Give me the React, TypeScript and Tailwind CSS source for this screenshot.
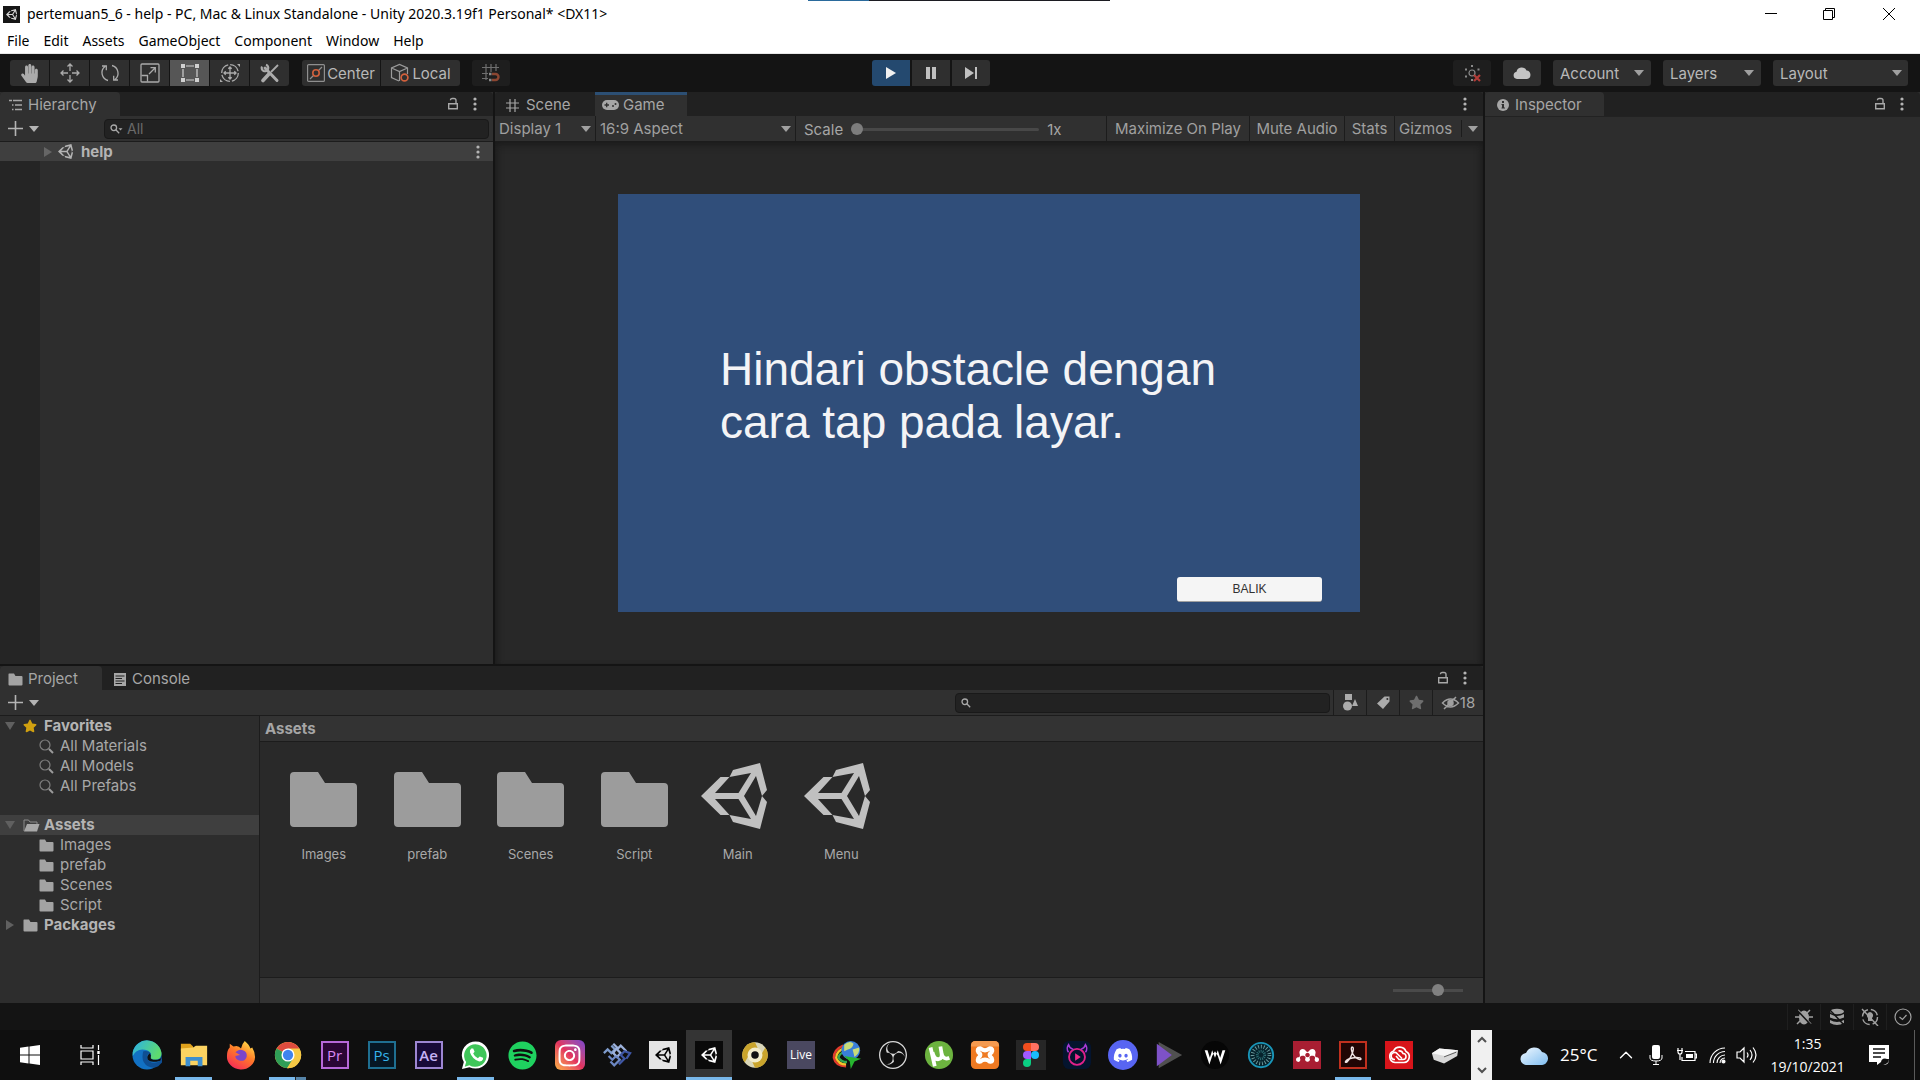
import React from "react";
import {
  FaDiscord,
  FaHandPaper,
  FaInstagram,
  FaMendeley,
  FaSpotify,
  FaStar,
} from "react-icons/fa";
import { LuChevronUp } from "react-icons/lu";
import { SiObsstudio } from "react-icons/si";

type Kids = { children?: React.ReactNode };
type Cls = { className?: string };

/* ---------- shared glyphs ---------- */

function UnityMark({ className }: Cls) {
  return (
    <svg viewBox="0 0 66 66" className={className} fill="currentColor" fillRule="evenodd" aria-hidden="true">
      <path d="M0 33 19.5 14H28.5L32 7 59 0 66 27 61 33 66 39 59 66 32 59 28.5 52H19.5ZM14 30H37.5L50 10 28.5 14ZM14 36 28.5 52 50 56 37.5 36ZM55 13 43 33 55 53 61 33Z" />
    </svg>
  );
}

function Arrow({ className = "text-[#a0a0a0]" }: Cls) {
  return (
    <svg width="10" height="6" viewBox="0 0 10 6" className={className} fill="currentColor" aria-hidden="true">
      <path d="M0 0H10L5 6Z" />
    </svg>
  );
}

function Dots() {
  return (
    <svg width="4" height="14" viewBox="0 0 4 14" fill="#b4b4b4" aria-hidden="true">
      <circle cx="2" cy="2" r="1.6" />
      <circle cx="2" cy="7" r="1.6" />
      <circle cx="2" cy="12" r="1.6" />
    </svg>
  );
}

function Lock() {
  return (
    <svg width="12" height="14" viewBox="0 0 12 14" fill="none" stroke="#a8a8a8" strokeWidth="1.4" aria-hidden="true">
      <path d="M1.7 6.7H10.3V11.7H1.700Z M9 6.500V3.500Q9 1.500 7 1.500H5Q3.400 1.500 3.400 3.300" />
    </svg>
  );
}

function Folder({ className }: Cls) {
  return (
    <svg width="15" height="13" viewBox="0 0 15 13" className={className} fill="#a3a3a3" aria-hidden="true">
      <path d="M1 .5H6L7.5 3H13.5Q14.5 3 14.5 4V11.5Q14.5 12.5 13.5 12.5H1.5Q.5 12.5 .5 11.5V1.3Q.5 .5 1 .5Z" />
    </svg>
  );
}

function OpenFolder() {
  return (
    <svg width="17" height="13" viewBox="0 0 17 13" aria-hidden="true">
      <path d="M1 12V1H5.5L7 3H14V5" fill="none" stroke="#8c8c8c" />
      <path d="M4 5H16.5L14 12.5H1Z" fill="#a8a8a8" />
    </svg>
  );
}

function Lens() {
  return (
    <svg width="15" height="15" viewBox="0 0 15 15" fill="none" aria-hidden="true">
      <circle cx="6" cy="6" r="5" stroke="#7d7d7d" strokeWidth="1.2" />
      <path d="M10 10 14 14" stroke="#9a9a9a" strokeWidth="2" />
    </svg>
  );
}

function SmallLens({ menu = false }: { menu?: boolean }) {
  return (
    <svg width="13" height="10" viewBox="0 0 13 10" fill="none" stroke="#a8a8a8" strokeWidth="1.3" aria-hidden="true">
      <circle cx="3.8" cy="3.8" r="2.8" />
      <path d="M5.8 5.8 9.2 9.2" />
      {menu && <path d="M8.5 4.2H12.5L10.5 6.4Z" fill="#a8a8a8" stroke="none" />}
    </svg>
  );
}

function PlusMenu({ label }: { label: string }) {
  return (
    <button aria-label={label} className="flex items-center gap-1.5 pl-2">
      <svg width="15" height="15" viewBox="0 0 15 15" stroke="#b4b4b4" strokeWidth="1.6" aria-hidden="true">
        <path d="M7.5 0V15M0 7.5H15" />
      </svg>
      <Arrow className="text-[#b4b4b4]" />
    </button>
  );
}

/* ---------- panel pieces ---------- */

function TabBar({ children, tools }: Kids & { tools?: React.ReactNode }) {
  return (
    <div className="flex h-6 shrink-0 items-stretch rounded-t-sm bg-[#212121]">
      {children}
      <div className="ml-auto flex items-center gap-[14px] pr-4">{tools}</div>
    </div>
  );
}

function Tab({ children, className }: Kids & Cls) {
  return (
    <button className={"flex items-center pt-0.5 text-[15px] leading-5 text-[#a6a6a6] " + (className ?? "")}>{children}</button>
  );
}

function PanelTools({ lock = true }: { lock?: boolean }) {
  return (
    <>
      {lock && (
        <button aria-label="Lock">
          <Lock />
        </button>
      )}
      <button aria-label="Panel menu">
        <Dots />
      </button>
    </>
  );
}

function Dropdown({ label, value, className, arrow }: { label: string; value: string; className: string; arrow: string }) {
  return (
    <div className={"relative flex items-center " + className}>
      <select aria-label={label} className="h-full w-full appearance-none bg-transparent outline-none">
        <option>{value}</option>
      </select>
      <span className={"pointer-events-none absolute top-1/2 -translate-y-1/2 " + arrow}>
        <Arrow />
      </span>
    </div>
  );
}

/* ---------- window chrome ---------- */

function TitleBar() {
  return (
    <header className="relative bg-white font-['Noto_Sans','Open_Sans',sans-serif] text-[14px] text-black">
      <div className="absolute left-[42.1%] top-0 flex h-px w-[302px]">
        <span className="w-[61px] bg-[#2a6a9c]" />
        <span className="flex-1 bg-[#1c1c22]" />
      </div>
      <div className="flex h-7 items-center">
        <span className="ml-[3px] flex size-[17px] items-center justify-center bg-[#161616]">
          <UnityMark className="size-[11px] text-[#d8d8d8]" />
        </span>
        <h1 className="ml-[7px] leading-5">pertemuan5_6 - help - PC, Mac &amp; Linux Standalone - Unity 2020.3.19f1 Personal* &lt;DX11&gt;</h1>
        <div className="ml-auto flex h-full pr-px">
          <button aria-label="Minimize" className="flex w-[58px] items-center justify-center">
            <svg width="12" height="12" stroke="#000" aria-hidden="true"><path d="M0 5.5H12" /></svg>
          </button>
          <button aria-label="Restore" className="flex w-[58px] items-center justify-center">
            <svg width="12" height="12" fill="none" stroke="#000" aria-hidden="true"><path d="M.5 2.5H9.5V11.5H.5ZM2.5 2V.5H11.5V9.5H10" /></svg>
          </button>
          <button aria-label="Close" className="flex w-[61px] items-center justify-center">
            <svg width="12" height="12" fill="none" stroke="#000" aria-hidden="true"><path d="M0 0 12 12M12 0 0 12" /></svg>
          </button>
        </div>
      </div>
      <nav className="flex h-[26px] items-center border-b border-[#e8e8e8]">
        {["File", "Edit", "Assets", "GameObject", "Component", "Window", "Help"].map((m) => (
          <button key={m} className="px-[7px] leading-5">{m}</button>
        ))}
      </nav>
    </header>
  );
}

const toolIcons: { name: string; icon: React.ReactNode }[] = [
  { name: "Hand", icon: <FaHandPaper className="size-[19px]" /> },
  {
    name: "Move",
    icon: (
      <svg width="20" height="20" viewBox="0 0 20 20" fill="none" stroke="currentColor" strokeWidth="1.3">
        <path d="M10 1V8M10 12V19M1 10H8M12 10H19M7.5 3.5 10 1 12.5 3.5M7.5 16.5 10 19 12.5 16.5M3.5 7.5 1 10 3.5 12.5M16.5 7.5 19 10 16.5 12.5" />
      </svg>
    ),
  },
  {
    name: "Rotate",
    icon: (
      <svg width="20" height="20" viewBox="0 0 20 20" fill="none" stroke="currentColor" strokeWidth="1.3">
        <path d="M8 17.5A8 8 0 0 1 5 3.5M2 3H6.3V7.2M12 2.5A8 8 0 0 1 15 16.5M18 17H13.700V12.800" />
      </svg>
    ),
  },
  {
    name: "Scale",
    icon: (
      <svg width="20" height="20" viewBox="0 0 20 20" fill="none" stroke="currentColor" strokeWidth="1.3">
        <rect x="1" y="1" width="18" height="18" rx="1" />
        <path d="M1.500 12.500H7.500V18.500M9 11 15 5M10.500 4.700H15.300V9.500" />
      </svg>
    ),
  },
  {
    name: "Rect",
    icon: (
      <svg width="20" height="20" viewBox="0 0 20 20" fill="currentColor" stroke="currentColor" strokeWidth="1.2">
        <path d="M6 3H14M6 17H14M3 6V14M17 6V14" />
        <path d="M1 1H5V5H1ZM15 1H19V5H15ZM1 15H5V19H1ZM15 15H19V19H15Z" stroke="none" />
      </svg>
    ),
  },
  {
    name: "Transform",
    icon: (
      <svg width="22" height="20" viewBox="0 0 22 20" fill="none" stroke="currentColor" strokeWidth="1.3">
        <circle cx="11" cy="10" r="8.300" strokeDasharray="11 2" />
        <path d="M11 4V16M5 10H17M9.300 5.700 11 4 12.700 5.700M9.300 14.300 11 16 12.700 14.300M6.700 8.300 5 10 6.700 11.700M15.300 8.300 17 10 15.300 11.700" />
        <path d="M18 1H21V4ZM1 16V19H4Z" fill="currentColor" stroke="none" />
      </svg>
    ),
  },
  {
    name: "Custom tools",
    icon: (
      <svg width="20" height="20" viewBox="0 0 20 20" fill="none" stroke="currentColor">
        <path d="M5 5 17 17.500" strokeWidth="3" strokeLinecap="round" />
        <path d="M2 3.500A3.300 3.300 0 1 0 6 1.800" strokeWidth="2.200" />
        <path d="M18 2 11 9" strokeWidth="1.800" />
        <path d="M8.500 11.500 3 17.500" strokeWidth="3.600" strokeLinecap="round" />
      </svg>
    ),
  },
];

const toolBtn = "flex h-[26px] items-center justify-center bg-[#2f2f2f]";

function Toolbar() {
  return (
    <div className="grid h-[38px] grid-cols-[1fr_auto_1fr] items-center bg-[#141414] pl-[10px] pr-3 text-[15px] leading-5 text-[#b8b8b8]">
      <div className="flex">
        <div className="flex gap-px overflow-hidden rounded-[3px]">
          {toolIcons.map((t) => (
            <button
              key={t.name}
              aria-label={t.name}
              className={
                t.name === "Rect"
                  ? "flex h-[26px] w-[39px] items-center justify-center bg-[#565656] text-[#d0d0d0]"
                  : "flex h-[26px] w-[39px] items-center justify-center bg-[#2f2f2f] text-[#ababab]"
              }
            >
              {t.icon}
            </button>
          ))}
        </div>
        <div className="ml-[13px] flex gap-px overflow-hidden rounded-[3px]">
          <button className={toolBtn + " w-[78px] gap-0.5"}>
            <svg width="18" height="18" viewBox="0 0 18 18" fill="none" stroke="#8f8f8f" aria-hidden="true">
              <rect x=".6" y=".6" width="16.800" height="16.800" rx="1" strokeWidth="1.200" />
              <path d="M11 7 15 3M3 15 7 11" strokeWidth="1.200" />
              <circle cx="9" cy="9" r="3.200" stroke="#d0603c" strokeWidth="1.600" />
            </svg>
            <span className="pt-px">Center</span>
          </button>
          <button className={toolBtn + " w-[79px] gap-0.5"}>
            <svg width="20" height="20" viewBox="0 0 20 20" fill="none" stroke="#9a9a9a" strokeWidth="1.200" aria-hidden="true">
              <path d="M9 18 1.500 14.500V5L9.500 1.500 17.500 5V11M1.500 5 9.500 8.500 17.500 5M9.500 8.500V18" />
              <circle cx="14.500" cy="14.500" r="3.400" stroke="#d0603c" strokeWidth="1.700" />
            </svg>
            <span className="pt-px">Local</span>
          </button>
        </div>
        <button aria-label="Grid snapping" className="ml-3 flex h-[26px] w-[38px] items-center justify-center rounded-[3px] bg-[#1e1e1e]">
          <svg width="18" height="18" viewBox="0 0 18 18" fill="none" stroke="#6f6f6f" strokeWidth="1.200" aria-hidden="true">
            <path d="M4 0V16M9 0V8M14 0V7M0 3.500H17M0 9.500H6M0 14.500H6" />
            <path d="M10 10H13.500A3 3 0 0 1 13.500 16H10" stroke="#8c4631" strokeWidth="2.400" />
            <path d="M7 10H9.500M7 16H9.500" stroke="#8a8a8a" strokeWidth="2.400" />
          </svg>
        </button>
      </div>

      <div className="mr-14 flex gap-0.5 overflow-hidden rounded-[3px]">
        <button aria-label="Play" className="flex h-[26px] w-[38px] items-center justify-center bg-[#24496f]">
          <svg width="10" height="12" fill="#f0f0f0"><path d="M0 0 10 6 0 12Z" /></svg>
        </button>
        <button aria-label="Pause" className={toolBtn + " w-[38px]"}>
          <svg width="10" height="12" fill="#c0c0c0"><path d="M0 0H4V12H0ZM6 0H10V12H6Z" /></svg>
        </button>
        <button aria-label="Step" className={toolBtn + " w-[38px]"}>
          <svg width="13" height="12" fill="#c0c0c0"><path d="M0 0 9 6 0 12ZM10 0H12V12H10Z" /></svg>
        </button>
      </div>

      <div className="flex justify-end gap-3">
        <button aria-label="Preview packages" className="flex h-[26px] w-[38px] items-center justify-center rounded-[3px] bg-[#1e1e1e]">
          <svg width="17" height="17" viewBox="0 0 17 17" fill="none" aria-hidden="true">
            <circle cx="8" cy="8" r="3" stroke="#8a8a8a" strokeWidth="1.200" />
            <path d="M7 0H9V2H7ZM7 14H9V16H7ZM1 3.500H3V5.500H1ZM13.500 3.500H15.500V5.500H13.500ZM1 10.500H3V12.500H1Z" fill="#8a8a8a" />
            <path d="M10 10 16 16M16 10 10 16" stroke="#b03c38" strokeWidth="2.200" />
          </svg>
        </button>
        <button aria-label="Cloud services" className={toolBtn + " w-[38px] rounded-[3px]"}>
          <svg width="18" height="12" viewBox="0 0 18 12" fill="#c4c4c4"><path d="M4 12A3.700 3.700 0 0 1 3.500 4.700 5.300 5.300 0 0 1 13.500 3.500 4.300 4.300 0 0 1 14 12Z" /></svg>
        </button>
        <Dropdown label="Account" value="Account" className="h-[26px] w-[98px] rounded-[3px] bg-[#2f2f2f] pl-[7px] pt-px" arrow="right-[7px]" />
        <Dropdown label="Layers" value="Layers" className="h-[26px] w-[98px] rounded-[3px] bg-[#2f2f2f] pl-[7px] pt-px" arrow="right-[7px]" />
        <Dropdown label="Layout" value="Layout" className="h-[26px] w-[135px] rounded-[3px] bg-[#2f2f2f] pl-[7px] pt-px" arrow="right-[6px]" />
      </div>
    </div>
  );
}

/* ---------- panels ---------- */

function Hierarchy() {
  return (
    <section className="flex min-w-0 flex-col bg-[#2d2d2d]">
      <TabBar tools={<PanelTools />}>
        <Tab className="w-[120px] gap-1.5 rounded-t-sm bg-[#303030] pl-[9px]">
          <svg width="13" height="12" viewBox="0 0 13 12" stroke="#a6a6a6" strokeWidth="1.400" aria-hidden="true">
            <path d="M0 1.500H3M4 1.500H13M3 6H4.500M6 6H13M3 10.500H4.500M6 10.500H13" />
          </svg>
          Hierarchy
        </Tab>
      </TabBar>
      <div className="flex h-[26px] shrink-0 items-center border-b border-[#1c1c1c] bg-[#303030] pr-1">
        <PlusMenu label="Create object" />
        <label className="ml-auto flex h-5 w-[385px] items-center gap-1 rounded-[4px] border border-[#191919] bg-[#222222] pl-[5px]">
          <SmallLens menu />
          <input aria-label="Search hierarchy" placeholder="All" className="min-w-0 flex-1 bg-transparent text-[14px] leading-5 text-[#a6a6a6] outline-none placeholder:text-[#6a6a6a]" />
        </label>
      </div>
      <div className="flex h-[19px] shrink-0 items-center bg-[#3f3f3f] pl-11 pr-[13px] text-[15px] font-bold leading-5 text-[#b4b4b4]">
        <svg width="8" height="10" fill="#666"><path d="M0 0 8 5 0 10Z" /></svg>
        <UnityMark className="ml-1.5 size-[15px] text-[#b4b4b4]" />
        <span className="ml-2">help</span>
        <button aria-label="Scene menu" className="ml-auto"><Dots /></button>
      </div>
      <div className="w-10 flex-1 bg-[#252525]" />
    </section>
  );
}

function GameView() {
  const cell = "flex items-center border-r border-[#1c1c1c]";
  return (
    <section className="flex min-w-0 flex-col bg-[#282828]">
      <TabBar tools={<PanelTools lock={false} />}>
        <Tab className="w-[100px] gap-[7px] pl-[11px]">
          <svg width="13" height="13" viewBox="0 0 13 13" stroke="#a6a6a6" strokeWidth="1.200" aria-hidden="true">
            <path d="M4 0V13M9 0V13M0 4H13M0 9H13" />
          </svg>
          Scene
        </Tab>
        <Tab className="w-[92px] gap-1 bg-[#303030] pl-[7px] shadow-[inset_0_3px_0_#2c4f74]">
          <svg width="17" height="10" viewBox="0 0 17 10" aria-hidden="true">
            <rect width="17" height="10" rx="5" fill="#a6a6a6" />
            <path d="M2.500 5H7M4.700 2.800V7.200" stroke="#303030" strokeWidth="1.300" />
            <circle cx="11" cy="6" r="1" fill="#303030" />
            <circle cx="13.500" cy="4" r="1" fill="#303030" />
          </svg>
          Game
        </Tab>
      </TabBar>
      <div className="flex h-[26px] shrink-0 items-stretch border-b border-[#1c1c1c] bg-[#303030] text-[15px] leading-5 text-[#a0a0a0]">
        <Dropdown label="Display" value="Display 1" className={cell + " w-[101px] pl-1"} arrow="right-1" />
        <Dropdown label="Aspect" value="16:9 Aspect" className={cell + " w-[200px] pl-1"} arrow="right-1" />
        <label className={cell + " min-w-0 flex-1 gap-2 pl-2 pt-0.5 text-[#a6a6a6]"}>
          Scale
          <input
            type="range"
            min="1"
            max="5"
            defaultValue="1"
            className="h-3 w-[188px] appearance-none bg-transparent [&::-webkit-slider-runnable-track]:h-[3px] [&::-webkit-slider-runnable-track]:rounded-full [&::-webkit-slider-runnable-track]:bg-[#484848] [&::-webkit-slider-thumb]:-mt-[5px] [&::-webkit-slider-thumb]:size-3 [&::-webkit-slider-thumb]:appearance-none [&::-webkit-slider-thumb]:rounded-full [&::-webkit-slider-thumb]:bg-[#7d7d7d]"
          />
          <span>1x</span>
        </label>
        <button className={cell + " w-[143px] justify-center"}>Maximize On Play</button>
        <button className={cell + " w-[95px] justify-center"}>Mute Audio</button>
        <button className={cell + " w-[50px] justify-center"}>Stats</button>
        <button className="flex w-[66px] items-center pl-1">Gizmos</button>
        <button aria-label="Gizmos menu" className="my-1 flex w-[22px] items-center justify-center border-l border-[#1c1c1c]">
          <Arrow />
        </button>
      </div>
      <div className="flex flex-1 items-center justify-center shadow-[inset_0_6px_8px_-4px_#1a1a1a,inset_-6px_0_8px_-6px_#1a1a1a,inset_6px_0_8px_-6px_#1a1a1a]">
        <div className="flex aspect-video w-[75.1%] flex-col bg-[#304e7a] font-['Liberation_Sans',Arial,sans-serif]">
          <p className="mx-[102px] mt-[149px] text-[46px] leading-[53px] text-[#f4f4f6]">
            Hindari obstacle dengan
            <br />
            cara tap pada layar.
          </p>
          <button className="mb-[10px] mr-[38px] mt-auto h-[25px] w-[145px] self-end rounded-[3px] border-b border-[#a0a0a0] bg-[#f5f5f5] text-[12px] leading-4 text-[#323232]">
            BALIK
          </button>
        </div>
      </div>
    </section>
  );
}

function TreeRow({ open, bold, selected, icon, children }: Kids & { open?: boolean; bold?: boolean; selected?: boolean; icon: React.ReactNode }) {
  if (!bold)
    return (
      <li className="flex h-5 items-center gap-1.5 pl-[39px] text-[15px] leading-5 text-[#a8a8a8]">
        {icon}
        {children}
      </li>
    );
  return (
    <li className={"flex h-5 items-center pl-[5px] text-[15px] font-bold leading-5 text-[#b4b4b4] " + (selected ? "bg-[#3f3f3f]" : "")}>
      <svg width="10" height="10" fill="#606060" aria-hidden="true">
        <path d={open ? "M0 1H10L5 9Z" : "M1 0 9 5 1 10Z"} />
      </svg>
      <span className="ml-2 flex w-[21px] items-center">{icon}</span>
      {children}
    </li>
  );
}

const folders = ["Images", "prefab", "Scenes", "Script"];

function Project() {
  const tool = "flex w-[33px] items-center justify-center border-l border-[#1c1c1c]";
  return (
    <section className="flex min-w-0 flex-col bg-[#292929]">
      <TabBar tools={<PanelTools />}>
        <Tab className="w-[102px] gap-[5px] rounded-t-sm bg-[#303030] pl-2">
          <Folder />
          Project
        </Tab>
        <Tab className="gap-1.5 pl-3">
          <svg width="12" height="13" viewBox="0 0 12 13" aria-hidden="true">
            <path d="M0 0H12V13H0Z" fill="#a6a6a6" />
            <path d="M1.500 3H10.500M1.500 5.500H8M1.500 8H10.500M1.500 10.500H8" stroke="#212121" strokeWidth="1.200" />
          </svg>
          Console
        </Tab>
      </TabBar>
      <div className="flex h-[26px] shrink-0 items-stretch border-b border-[#1c1c1c] bg-[#303030]">
        <PlusMenu label="Create asset" />
        <label className="my-auto ml-auto mr-[3px] flex h-5 w-[375px] items-center rounded-[4px] border border-[#191919] bg-[#222222] pl-[5px]">
          <SmallLens />
          <input aria-label="Search project" className="min-w-0 flex-1 bg-transparent text-[14px] leading-5 text-[#a6a6a6] outline-none" />
        </label>
        <button aria-label="Search by type" className={tool}>
          <svg width="15" height="17" viewBox="0 0 15 17" fill="#ababab"><path d="M2 0H9V6H2ZM9 12 12 5 15 12Z" /><circle cx="4.500" cy="12" r="4.500" /></svg>
        </button>
        <button aria-label="Search by label" className={tool}>
          <svg width="13" height="13" viewBox="0 0 13 13" fill="#ababab" fillRule="evenodd"><path d="M7.500 .5H12.500V5.500L6 13 0 7.500ZM10.300 2A1 1 0 1 0 10.400 4 1 1 0 0 0 10.300 2Z" /></svg>
        </button>
        <button aria-label="Save search" className={tool}>
          <FaStar className="size-[15px] text-[#6e6e6e]" />
        </button>
        <button className="flex w-[51px] items-center justify-center border-l border-[#1c1c1c] text-[15px] leading-5 text-[#a6a6a6]">
          <svg width="19" height="14" viewBox="0 0 18 14" fill="none" stroke="#a0a0a0" strokeWidth="1.500" aria-hidden="true">
            <path d="M1 7Q9-1 17 7 9 15 1 7ZM2.500 13 14.500 1" />
            <circle cx="9" cy="7" r="2.500" fill="#a0a0a0" />
          </svg>
          18
        </button>
      </div>
      <div className="grid min-h-0 flex-1 grid-cols-[260px_1fr]">
        <ul className="border-r border-[#1c1c1c] bg-[#2d2d2d]">
          <TreeRow bold open icon={<FaStar className="size-[14px] text-[#d0a010]" />}>Favorites</TreeRow>
          {["All Materials", "All Models", "All Prefabs"].map((f) => (
            <TreeRow key={f} icon={<Lens />}>{f}</TreeRow>
          ))}
          <li aria-hidden="true" className="h-[19px]" />
          <TreeRow bold open selected icon={<OpenFolder />}>Assets</TreeRow>
          {folders.map((f) => (
            <TreeRow key={f} icon={<Folder />}>{f}</TreeRow>
          ))}
          <TreeRow bold icon={<Folder />}>Packages</TreeRow>
        </ul>
        <div className="flex min-w-0 flex-col">
          <div className="flex h-[26px] shrink-0 items-center border-b border-[#1c1c1c] bg-[#333333] pl-[5px] text-[15px] font-bold leading-5 text-[#a6a6a6]">Assets</div>
          <div className="flex-1 pl-3 pt-[21px]">
            <ul className="grid w-[621px] grid-cols-6 text-[13px] leading-[18px] text-[#a8a8a8]">
              {folders.map((f) => (
                <li key={f} className="flex flex-col items-center gap-4">
                  <svg width="67" height="66" viewBox="0 0 67 66" fill="#9c9c9c" aria-hidden="true">
                    <path d="M4 9H28L35 20H63Q67 20 67 24V60Q67 64 63 64H4Q0 64 0 60V13Q0 9 4 9Z" />
                  </svg>
                  {f}
                </li>
              ))}
              {["Main", "Menu"].map((f) => (
                <li key={f} className="flex flex-col items-center gap-4">
                  <UnityMark className="mr-2 size-[66px] text-[#c0c0c0]" />
                  {f}
                </li>
              ))}
            </ul>
          </div>
          <div className="flex h-[26px] shrink-0 items-center justify-end border-t border-[#1c1c1c] bg-[#333333] pr-5">
            <input
              aria-label="Icon size"
              type="range"
              min="0"
              max="100"
              defaultValue="68"
              className="h-3 w-[70px] appearance-none bg-transparent [&::-webkit-slider-runnable-track]:h-[3px] [&::-webkit-slider-runnable-track]:bg-[#4a4a4a] [&::-webkit-slider-thumb]:-mt-[5px] [&::-webkit-slider-thumb]:size-3 [&::-webkit-slider-thumb]:appearance-none [&::-webkit-slider-thumb]:rounded-full [&::-webkit-slider-thumb]:bg-[#808080]"
            />
          </div>
        </div>
      </div>
    </section>
  );
}

function Inspector() {
  return (
    <aside className="flex w-[435px] shrink-0 flex-col bg-[#2d2d2d]">
      <TabBar tools={<PanelTools />}>
        <Tab className="w-[119px] gap-1.5 rounded-t-sm bg-[#303030] pl-3">
          <svg width="12" height="12" viewBox="0 0 12 12" aria-hidden="true">
            <circle cx="6" cy="6" r="6" fill="#a6a6a6" />
            <path d="M5 2H7V4H5ZM4.500 5H7V8.500H8V9.500H4.500V8.500H5V6H4.500Z" fill="#303030" />
          </svg>
          Inspector
        </Tab>
      </TabBar>
      <div className="border-t border-[#222222]" />
    </aside>
  );
}

function StatusBar() {
  const cell = "flex w-[33px] items-center justify-center border-l border-[#1f1f1f]";
  return (
    <div className="flex h-[27px] shrink-0 justify-end bg-[#141414] pr-px pt-px text-[#a0a0a0]">
      <button aria-label="Debug mode" className={cell}>
        <svg width="18" height="18" viewBox="0 0 18 18" fill="currentColor" stroke="currentColor" strokeWidth="1.500">
          <path d="M3 2 6 5M15 2 12 5M0 9H4M18 9H14M2 16 6 12M16 16 12 12" />
          <ellipse cx="9" cy="9.500" rx="5" ry="7" stroke="none" />
          <path d="M1 1 17 18" stroke="#141414" strokeWidth="1.500" />
        </svg>
      </button>
      <button aria-label="Cache server" className={cell}>
        <svg width="18" height="18" viewBox="0 0 18 18" fill="currentColor">
          <ellipse cx="9" cy="3.500" rx="7" ry="2.800" />
          <path d="M2 6Q9 10 16 6V9.500Q9 13 2 9.500ZM2 12Q9 16 16 12V15Q9 19 2 15Z" />
          <path d="M1 1 17 18" stroke="#141414" strokeWidth="1.500" />
        </svg>
      </button>
      <button aria-label="Auto refresh" className={cell}>
        <svg width="18" height="18" viewBox="0 0 18 18" fill="none" stroke="currentColor" strokeWidth="1.400">
          <circle cx="9" cy="9" r="7.500" strokeDasharray="9 3" />
          <path d="M9 4A3.500 3.500 0 0 1 11 10V13H7V10A3.500 3.500 0 0 1 9 4Z" fill="currentColor" stroke="none" />
          <path d="M1 1 17 18" />
        </svg>
      </button>
      <button aria-label="Background tasks" className={cell}>
        <svg width="18" height="18" viewBox="0 0 18 18" fill="none" stroke="currentColor" strokeWidth="1.200">
          <circle cx="9" cy="9" r="8" />
          <path d="M5.500 9 8.500 11.500 12.500 7" />
        </svg>
      </button>
    </div>
  );
}

/* ---------- taskbar ---------- */

function Tile({ className, children }: Kids & Cls) {
  return <span className={"flex size-7 items-center justify-center " + (className ?? "")}>{children}</span>;
}

const svg30 = "size-[30px]";
const box = "0 0 32 32";

type AppEntry = { name: string; icon: React.ReactNode; state?: "open" | "multi" | "active" };

const pinned: AppEntry[] = [
  {
    name: "Edge",
    icon: (
      <svg viewBox={box} className={svg30}>
        <defs>
          <linearGradient id="edge-top" x1="0" y1="0" x2="1" y2="0.4">
            <stop offset="0" stopColor="#2bb0e8" />
            <stop offset="1" stopColor="#5edb6e" />
          </linearGradient>
        </defs>
        <circle cx="16" cy="16" r="15.500" fill="#1271c4" />
        <path d="M.8 13A15.500 15.500 0 0 1 31.500 15Q31 21 25 21 19 21 20 18 21 16 19.500 13.500 17 10 11 10 4 10 .8 17Z" fill="url(#edge-top)" />
        <path d="M12 12Q18 11 20.500 15 18 13.500 16.500 16 15 22 21 24 26 25 30 22L31 17 33 23 28 28Q23 31 17 28 9 24 12 12Z" fill="#0f4f94" />
        <path d="M19 14Q15 17 17 21 20 25 30 22L32 18Q30 21 25 21 19 21 20 18 20.700 16 19 14Z" fill="#101010" />
      </svg>
    ),
  },
  {
    name: "File Explorer",
    state: "open",
    icon: (
      <svg viewBox={box} className={svg30}>
        <path d="M2 4H12L15 7V12H2Z" fill="#e0a21c" />
        <path d="M2 9 15 8 18 6H30V27H2Z" fill="#fcd361" />
        <path d="M7 28V18H25V28H20V22H12V28Z" fill="#3e8fcf" />
      </svg>
    ),
  },
  {
    name: "Firefox",
    icon: (
      <svg viewBox={box} className={svg30}>
        <defs>
          <linearGradient id="fox" x1="0.8" y1="0" x2="0.2" y2="1">
            <stop offset="0" stopColor="#ffe14a" />
            <stop offset="0.45" stopColor="#ff7a28" />
            <stop offset="1" stopColor="#f5265a" />
          </linearGradient>
        </defs>
        <path d="M20 1Q25 5 26 9L28 8Q31 13 31 18A15 14 0 0 1 1 17Q1 11 4 8V4Q7 6 8 7 13 5 16 9 17 4 20 1Z" fill="url(#fox)" />
        <path d="M10 13Q14 9 18 11 23 13 22 18 20 23 15 22 10 21 10 17L15 16Z" fill="#7a45c9" />
      </svg>
    ),
  },
  {
    name: "Chrome",
    state: "multi",
    icon: (
      <svg viewBox={box} className={svg30}>
        <circle cx="16" cy="16" r="14" fill="#f6c945" />
        <path d="M16 16 3.900 9A14 14 0 0 1 28.100 9Z" fill="#dd4b3e" />
        <path d="M16 16 3.900 9A14 14 0 0 0 15 30L22 19.500Z" fill="#2f9e56" />
        <path d="M16 9H28.100A14 14 0 0 1 15 30L22 19Z" fill="#f6c945" />
        <circle cx="16" cy="16" r="7" fill="#fff" />
        <circle cx="16" cy="16" r="5.500" fill="#3f83ee" />
      </svg>
    ),
  },
  { name: "Premiere Pro", icon: <Tile className="border-2 border-[#b668d8] bg-[#2a0634] text-[15px] leading-5 text-[#d98af5]">Pr</Tile> },
  { name: "Photoshop", icon: <Tile className="border-2 border-[#1f6f91] bg-[#061724] text-[15px] leading-5 text-[#35b3ec]">Ps</Tile> },
  { name: "After Effects", icon: <Tile className="border-2 border-[#9d86d2] bg-[#180a38] text-[15px] font-semibold leading-5 text-[#c6b2f5]">Ae</Tile> },
  {
    name: "WhatsApp",
    state: "open",
    icon: (
      <svg viewBox={box} className={svg30}>
        <path d="M1 31 3 23.500A14.500 14.500 0 1 1 9 29Z" fill="#fff" />
        <path d="M4 28.500 5.500 23.500A12 12 0 1 1 9 26.800Z" fill="#3fc659" />
        <path d="M11 9Q9 10.500 9.500 13 12 20.500 19.500 23 22.500 23 23.500 20.500V19L20 17.500 18 19.500Q14.500 18 13 14.500L14.500 12.500 13 9Z" fill="#fff" />
      </svg>
    ),
  },
  { name: "Spotify", icon: <FaSpotify className="size-[29px] text-[#1fd15f]" /> },
  {
    name: "Instagram",
    icon: (
      <span className="flex size-[30px] items-center justify-center rounded-md bg-linear-to-tr from-[#fbb040] via-[#e2325f] to-[#7a3fd0] text-white">
        <FaInstagram className="size-[25px]" />
      </span>
    ),
  },
  {
    name: "PES",
    icon: (
      <svg viewBox={box} className={svg30} fill="none" strokeWidth="2.400">
        <path d="M2 14 6 10 10 14 14 10 10 6" stroke="#7f9ccc" />
        <path d="M12 4 16 8 12 14 16 18 20 14 16 10 20 6 26 12" stroke="#9db2dc" />
        <path d="M7 17 11 21 15 17M9 23 13 27 19 21 15 17" stroke="#6d88c4" />
        <path d="M18 26 24 20 20 16 24 12 30 14 26 20" stroke="#3f56a4" />
      </svg>
    ),
  },
];

const docked: AppEntry[] = [
  { name: "Unity Hub", icon: <Tile className="bg-[#e4e4e4] text-black"><UnityMark className="size-4" /></Tile> },
  { name: "Unity", state: "active", icon: <Tile className="bg-[#0a0a0a] text-white"><UnityMark className="size-4" /></Tile> },
  {
    name: "Disc player",
    icon: (
      <svg viewBox={box} className={svg30}>
        <circle cx="16" cy="16" r="13.500" fill="#d9d6b8" />
        <path d="M5 24A13.500 13.500 0 0 1 16 2.500L19 9A8 8 0 0 0 9 17ZM27 8A13.500 13.500 0 0 1 16 29.500L13 23A8 8 0 0 0 23 15Z" fill="#c9a42c" />
        <circle cx="16" cy="16" r="8" fill="#f2ecca" />
        <circle cx="16" cy="16" r="4" fill="#111" />
      </svg>
    ),
  },
  { name: "Live", icon: <Tile className="bg-[#4a4860] text-[12px] leading-4 text-white">Live</Tile> },
  {
    name: "Download Manager",
    icon: (
      <svg viewBox={box} className={svg30}>
        <g fill="none" strokeWidth="2.600">
          <path d="M12 6Q2 10 2 19 4 28 15 28" stroke="#e23b2c" />
          <path d="M13 9Q4.500 12 4.500 19 7 26 15 26" stroke="#f4c62b" />
          <path d="M14 12Q7 15 7 19 10 23.500 16 23.500" stroke="#35a850" />
        </g>
        <circle cx="20" cy="11" r="10" fill="#3a7fd8" />
        <path d="M13 5Q19 0 23 4 22 9 17 10L13 12ZM22 10 29 8Q30 14 24 18Z" fill="#c8dc7a" />
        <path d="M13 17 31 20 24 23 20 31 19 23Z" fill="#27b52f" />
      </svg>
    ),
  },
  { name: "OBS Studio", icon: <SiObsstudio className="size-[28px] text-[#d8d8d8]" /> },
  {
    name: "uTorrent",
    icon: (
      <svg viewBox={box} className={svg30}>
        <circle cx="16" cy="16" r="15" fill="#6cb33f" />
        <path d="M7 8 11.500 28M9 13Q11 21 15.500 20.500 20 20 18.500 13L17.500 7M18.500 13Q20 22 27 19" fill="none" stroke="#fff" strokeWidth="4" />
      </svg>
    ),
  },
  {
    name: "XAMPP",
    icon: (
      <svg viewBox={box} className={svg30}>
        <rect x="1" y="1" width="30" height="30" rx="5" fill="#ef7a22" />
        <path d="M1 6Q1 1 6 1H26Q31 1 31 6V7H1Z" fill="#f49a50" />
        <path d="M11 9Q16 13 21 9 25 9 23 13 19 16 23 19 25 24 21 23 16 19 11 23 7 24 9 19 13 16 9 13 7 9 11 9Z" fill="none" stroke="#fff" strokeWidth="4.500" strokeLinejoin="round" />
      </svg>
    ),
  },
  {
    name: "Figma",
    icon: (
      <span className="flex size-[30px] items-center justify-center bg-[#262626]">
        <svg viewBox="0 0 16 24" className="h-[24px] w-[16px]">
          <path d="M8 0H4A4 4 0 0 0 4 8H8Z" fill="#f24e1e" />
          <path d="M8 0H12A4 4 0 0 1 12 8H8Z" fill="#ff7262" />
          <path d="M8 8H4A4 4 0 0 0 4 16H8Z" fill="#a259ff" />
          <circle cx="12" cy="12" r="4" fill="#1abcfe" />
          <path d="M8 16H4A4 4 0 1 0 8 20Z" fill="#0acf83" />
        </svg>
      </span>
    ),
  },
  {
    name: "Stream player",
    icon: (
      <svg viewBox={box} className={svg30}>
        <rect x="1" y="1" width="30" height="30" rx="7" fill="#04142e" />
        <circle cx="16" cy="18" r="8.500" fill="none" stroke="#e0218a" strokeWidth="2" />
        <path d="M7 13Q4 9 7 5 8 9 12 10M25 13Q28 9 25 5 24 9 20 10" fill="none" stroke="#a83bd8" strokeWidth="1.600" />
        <path d="M14 14 20 18 14 22Z" fill="#f02a8a" />
      </svg>
    ),
  },
  { name: "Discord", icon: <span className="flex size-[30px] items-center justify-center rounded-full bg-[#5865f2] text-white"><FaDiscord className="size-5" /></span> },
  {
    name: "Video editor",
    icon: (
      <svg viewBox={box} className={svg30}>
        <path d="M5 2 30 16 5 30Z" fill="#505050" />
        <path d="M3 4 19 16 3 28Z" fill="#7e52c8" />
      </svg>
    ),
  },
  {
    name: "Waves",
    icon: (
      <svg viewBox={box} className={svg30}>
        <circle cx="16" cy="16" r="15" fill="#060606" />
        <path d="M5 11H8L10.500 19 13 11 16 19 19 11 21.500 19 24 11H27L22 26 19 17 16 12 13 17 10 26Z" fill="#fff" />
      </svg>
    ),
  },
  {
    name: "Camera tool",
    icon: (
      <svg viewBox={box} className={svg30} fill="none">
        <circle cx="16" cy="16" r="13" fill="#06222c" stroke="#1995b8" strokeWidth="2" />
        <circle cx="16" cy="16" r="9" stroke="#6c9a9c" strokeWidth="4" strokeDasharray="1 2" />
        <circle cx="16" cy="16" r="4" stroke="#2c6f74" strokeWidth="3" strokeDasharray="1 1" />
      </svg>
    ),
  },
  { name: "Mendeley", icon: <Tile className="bg-[#a81e32] text-white"><FaMendeley className="size-[23px]" /></Tile> },
  {
    name: "Acrobat",
    state: "open",
    icon: (
      <Tile className="border-2 border-[#c0301e] bg-[#200504]">
        <svg viewBox="0 0 20 20" className="size-5" fill="none" stroke="#f0e4e4" strokeWidth="1.400">
          <path d="M9 2Q11 2 10 6 8 13 4 17 2 18 2.500 16.500 5 13 13 12.500 18 12.500 18 14 17 15.500 14 13.500 9 10 8.300 4 8.300 2 9 2Z" />
        </svg>
      </Tile>
    ),
  },
  {
    name: "Creative Cloud",
    icon: (
      <Tile className="bg-[#d8141a]">
        <svg viewBox="0 0 24 20" className="w-6" fill="none" stroke="#fff" strokeWidth="1.600">
          <path d="M8 17.500A6 6 0 0 1 6.500 6 6.800 6.800 0 0 1 19 6.500 5.800 5.800 0 0 1 17 17.500Z" />
          <path d="M8 14.500A3.500 3.500 0 1 1 10.500 9L15 13.500M11.500 6A4 4 0 0 1 16 8.500 3 3 0 1 1 16 14.500H12L9 11" />
        </svg>
      </Tile>
    ),
  },
  {
    name: "Headset",
    icon: (
      <svg viewBox={box} className={svg30}>
        <path d="M2 14 10 9 30 11 29 17 15 25 4 21Z" fill="#d8d8d8" />
        <path d="M2 14 16 17 30 11 10 9Z" fill="#f6f6f6" />
        <path d="M15 18 28 13" stroke="#555" />
      </svg>
    ),
  },
];

function AppGroup({ items, className }: { items: AppEntry[]; className: string }) {
  return (
    <div className={"flex min-w-0 " + className}>
      {items.map((a) => (
        <button
          key={a.name}
          aria-label={a.name}
          className={"relative flex min-w-0 flex-1 items-center justify-center " + (a.state === "active" ? "bg-[#343434]" : "")}
        >
          {a.icon}
          {a.state && (
            <span className={"absolute bottom-0 flex h-[3px] bg-[#79b8ea] " + (a.state === "active" ? "inset-x-0" : "inset-x-[5px]")}>
              {a.state === "multi" && <span className="ml-auto w-[11px] border-l border-[#222] bg-[#5684a8]" />}
            </span>
          )}
        </button>
      ))}
    </div>
  );
}

function Taskbar() {
  return (
    <footer className="flex h-[50px] shrink-0 items-stretch bg-[#0f0f0f] font-['Open_Sans','Noto_Sans',sans-serif] text-white">
      <button aria-label="Start" className="flex w-[60px] items-center justify-center">
        <svg width="20" height="20" viewBox="0 0 20 20" fill="#fff"><path d="M0 2.800 8.500 1.500V9.500H0ZM9.500 1.400 20 0V9.500H9.500ZM0 10.500H8.500V18.500L0 17.300ZM9.500 10.500H20V20L9.500 18.600Z" /></svg>
      </button>
      <button aria-label="Task View" className="flex w-[63px] items-center pl-5">
        <svg width="20" height="20" viewBox="0 0 20 20" fill="none" stroke="#fff" strokeWidth="1.200"><path d="M1 0V3H13V0M1 6H13V14H1ZM1 20V17H13V20M18.500 0V5M18.500 10V20" /><path d="M17.300 6H19.700V9H17.300Z" fill="#fff" stroke="none" /></svg>
      </button>
      <AppGroup items={pinned} className="flex-[517]" />
      <AppGroup items={docked} className="flex-[828]" />
      <div className="ml-[3px] flex w-[21px] flex-col items-center justify-between bg-[#f0f0f0] py-1.5">
        <button aria-label="Scroll up" className="flex"><svg width="10" height="8" fill="none" stroke="#505050" strokeWidth="2"><path d="M1 6 5 2 9 6" /></svg></button>
        <button aria-label="Scroll down" className="flex"><svg width="10" height="8" fill="none" stroke="#505050" strokeWidth="2"><path d="M1 2 5 6 9 2" /></svg></button>
      </div>
      <div className="flex w-[428px] items-center pl-7">
        <button className="flex items-center gap-3 text-[17px] leading-6">
          <svg width="28" height="20" viewBox="0 0 28 20" aria-hidden="true">
            <defs>
              <linearGradient id="sky" x1="0" y1="0" x2="1" y2="1">
                <stop offset="0" stopColor="#f0f8ff" />
                <stop offset="1" stopColor="#7fbdf0" />
              </linearGradient>
            </defs>
            <path d="M7 20A6 6 0 0 1 6 8 9 9 0 0 1 22 7 6.500 6.500 0 0 1 21 20Z" fill="url(#sky)" />
          </svg>
          25°C
        </button>
        <button aria-label="Hidden icons" className="ml-[18px]"><LuChevronUp className="size-[22px]" strokeWidth={1.500} /></button>
        <button aria-label="Microphone" className="ml-3">
          <svg width="14" height="20" viewBox="0 0 14 20"><rect x="3" width="8" height="14" rx="2" fill="#fff" /><path d="M1 10V13Q1 16 7 16 13 16 13 13V10M7 16V20M4 19.500H10" fill="none" stroke="#fff" /></svg>
        </button>
        <button aria-label="Battery" className="ml-[14px]">
          <svg width="20" height="16" viewBox="0 0 20 16" fill="none" stroke="#fff" strokeWidth="1.200"><path d="M8 4.500H18V13.500H5V10M18 7H19.500V11H18M1 1V5Q1 7 3 7T5 5V1M0 3.500H6M3 7V13" /><path d="M9 7H16V11H9Z" fill="#fff" stroke="none" /></svg>
        </button>
        <button aria-label="Network" className="ml-3">
          <svg width="17" height="17" viewBox="0 0 17 17" fill="none" stroke="#fff" strokeWidth="1.100"><path d="M1 16A15 15 0 0 1 16 1M4.500 16A11.500 11.500 0 0 1 16 4.500M8 16A8 8 0 0 1 16 8M11 16A5 5 0 0 1 16 11" /><circle cx="14.500" cy="14.500" r="1.500" fill="#fff" /></svg>
        </button>
        <button aria-label="Volume" className="ml-[10px]">
          <svg width="22" height="18" viewBox="0 0 22 18" fill="none" stroke="#fff" strokeWidth="1.200"><path d="M1 6H4L8 2V16L4 12H1ZM11 6.500Q13 9 11 11.500M14 4Q18 9 14 14M17 1.500Q23 9 17 16.500" /></svg>
        </button>
        <button className="ml-3 flex flex-col items-center text-[14px] leading-[23px]">
          <span>1:35</span>
          <span>19/10/2021</span>
        </button>
        <button aria-label="Notifications" className="ml-auto mr-[24px]">
          <svg width="21" height="21" viewBox="0 0 21 21"><path d="M0 0H20V14H18A4 4 0 0 0 12 17L8 20V17H0Z" fill="#fff" /><path d="M4 4H16M4 8H16M4 12H12" stroke="#111" strokeWidth="1.400" /><path d="M19 12Q22 18 14 20 20 20 20 15Z" fill="#fff" /></svg>
        </button>
        <span className="mr-[5px] h-full border-l border-[#5a5a5a]" />
      </div>
    </footer>
  );
}

export default function App() {
  return (
    <div className="flex min-h-screen flex-col bg-[#141414] font-['Inter',sans-serif] antialiased">
      <TitleBar />
      <Toolbar />
      <main className="flex flex-1 gap-0.5">
        <div className="grid min-w-0 flex-1 grid-rows-[572fr_337fr] gap-0.5">
          <div className="grid grid-cols-[493fr_988fr] gap-0.5">
            <Hierarchy />
            <GameView />
          </div>
          <Project />
        </div>
        <Inspector />
      </main>
      <StatusBar />
      <Taskbar />
    </div>
  );
}
